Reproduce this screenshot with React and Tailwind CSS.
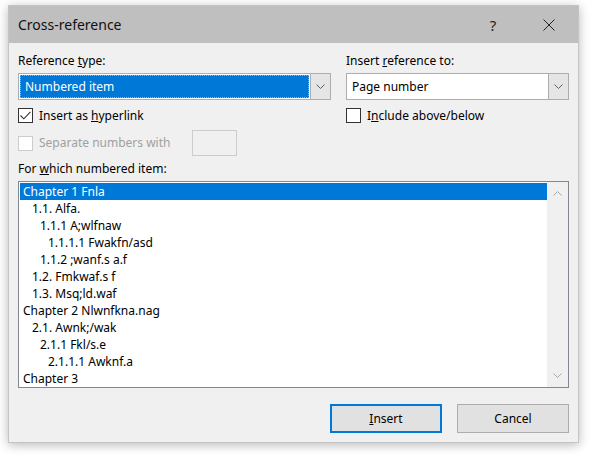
import React from 'react';

const items = [
  { level: 0, text: 'Chapter 1 Fnla' },
  { level: 1, text: '1.1. Alfa.' },
  { level: 2, text: '1.1.1 A;wlfnaw' },
  { level: 3, text: '1.1.1.1 Fwakfn/asd' },
  { level: 2, text: '1.1.2 ;wanf.s a.f' },
  { level: 1, text: '1.2. Fmkwaf.s f' },
  { level: 1, text: '1.3. Msq;ld.waf' },
  { level: 0, text: 'Chapter 2 Nlwnfkna.nag' },
  { level: 1, text: '2.1. Awnk;/wak' },
  { level: 2, text: '2.1.1 Fkl/s.e' },
  { level: 3, text: '2.1.1.1 Awknf.a' },
  { level: 0, text: 'Chapter 3' },
];

const indent = ['pl-[3px]', 'pl-[12px]', 'pl-[20px]', 'pl-[28px]'];

function Chevron({ up, color = '#606060' }) {
  return (
    <svg width="9" height="5" viewBox="0 0 9 5" fill="none">
      <polyline
        points={up ? '0.5,4.5 4.5,0.5 8.5,4.5' : '0.5,0.5 4.5,4.5 8.5,0.5'}
        stroke={color}
        strokeWidth="1"
      />
    </svg>
  );
}

function Checkbox({ checked, disabled }) {
  return (
    <span
      className={`w-[15px] h-[15px] shrink-0 flex items-center justify-center bg-white border ${
        disabled ? 'border-[#cccccc]' : 'border-[#333333]'
      }`}
    >
      {checked && (
        <svg width="11" height="9" viewBox="0 0 11 9" fill="none">
          <polyline points="0.5,4.5 3.8,7.8 10.5,0.8" stroke="#333333" strokeWidth="1.1" />
        </svg>
      )}
    </span>
  );
}

function Select({ value, selected, className }) {
  return (
    <div className={`h-[27px] flex bg-white border border-[#adadad] ${className}`}>
      <div className="flex-1 p-[1px] min-w-0">
        {selected ? (
          <div className="h-full bg-[#0078d7] text-white border border-dotted border-[#e8a33c] flex items-center pl-[4px]">
            {value}
          </div>
        ) : (
          <div className="h-full flex items-center pl-[4px] text-black">{value}</div>
        )}
      </div>
      <div className="w-[20px] bg-[#e5e5e5] border-l border-[#adadad] flex items-center justify-center">
        <Chevron />
      </div>
    </div>
  );
}

export default function App() {
  return (
    <div
      className="w-[590px] h-[455px] bg-white pt-[5px] pl-[8px] text-[12px] leading-[16px] text-black"
      style={{ fontFamily: '"Noto Sans", "Open Sans", sans-serif' }}
    >
      <div className="w-[571px] h-[438px] bg-[#f0f0f0] flex flex-col shadow-[0_2px_10px_rgba(0,0,0,0.28)] border border-[#c4c4c4]">
        {/* title bar */}
        <div className="h-[37px] bg-[#bfbfbf] flex items-center shrink-0">
          <span className="pl-[9px] text-[14px] text-[#111]">Cross-reference</span>
          <span className="ml-auto mr-[10px] text-[15px] text-[#222] w-[46px] text-center">?</span>
          <span className="w-[46px] flex justify-center mr-[6px]">
            <svg width="12" height="12" viewBox="0 0 12 12" fill="none">
              <path d="M0.5 0.5 L11.5 11.5 M11.5 0.5 L0.5 11.5" stroke="#222" strokeWidth="1" />
            </svg>
          </span>
        </div>

        <div className="px-[9px] flex flex-col">
          <div className="flex gap-[15px] pt-[10px]">
            {/* left column */}
            <div className="w-[313px] flex flex-col">
              <div className="h-[16px]">
                Reference <span className="underline">t</span>ype:
              </div>
              <Select value="Numbered item" selected className="mt-[4px]" />
              <div className="mt-[8px] h-[15px] flex items-center gap-[6px]">
                <Checkbox checked />
                <span>
                  Insert as <span className="underline">h</span>yperlink
                </span>
              </div>
              <div className="mt-[7px] h-[26px] flex items-center">
                <Checkbox disabled />
                <span className="ml-[6px] w-[153px] text-[#a0a0a0]">Separate numbers with</span>
                <span className="w-[45px] h-[26px] border border-[#cccccc] bg-[#f0f0f0]" />
              </div>
            </div>
            {/* right column */}
            <div className="w-[223px] flex flex-col">
              <div className="h-[16px]">
                Insert <span className="underline">r</span>eference to:
              </div>
              <Select value="Page number" className="mt-[4px]" />
              <div className="mt-[8px] h-[15px] flex items-center gap-[6px]">
                <Checkbox />
                <span>
                  I<span className="underline">n</span>clude above/below
                </span>
              </div>
            </div>
          </div>

          <div className="mt-[5px] h-[16px]">
            For <span className="underline">w</span>hich numbered item:
          </div>
          <div className="mt-[4px] h-[207px] border border-[#828790] bg-white flex">
            <div className="flex-1 pt-[1px] pl-[1px]">
              {items.map((it, i) => (
                <div
                  key={i}
                  className={`h-[17px] flex items-center whitespace-nowrap ${indent[it.level]} ${
                    i === 0 ? 'bg-[#0078d7] text-white' : ''
                  }`}
                >
                  {it.text}
                </div>
              ))}
            </div>
            <div className="w-[21px] bg-[#f0f0f0] flex flex-col items-center justify-between py-[9px]">
              <Chevron up color="#a8a8a8" />
              <Chevron color="#a8a8a8" />
            </div>
          </div>

          <div className="mt-[16px] flex justify-end gap-[15px]">
            <button className="w-[112px] h-[29px] bg-[#e1e1e1] border-2 border-[#0078d7] text-black">
              <span className="underline">I</span>nsert
            </button>
            <button className="w-[112px] h-[29px] bg-[#e1e1e1] border border-[#adadad] text-black">
              Cancel
            </button>
          </div>
        </div>
      </div>
    </div>
  );
}
